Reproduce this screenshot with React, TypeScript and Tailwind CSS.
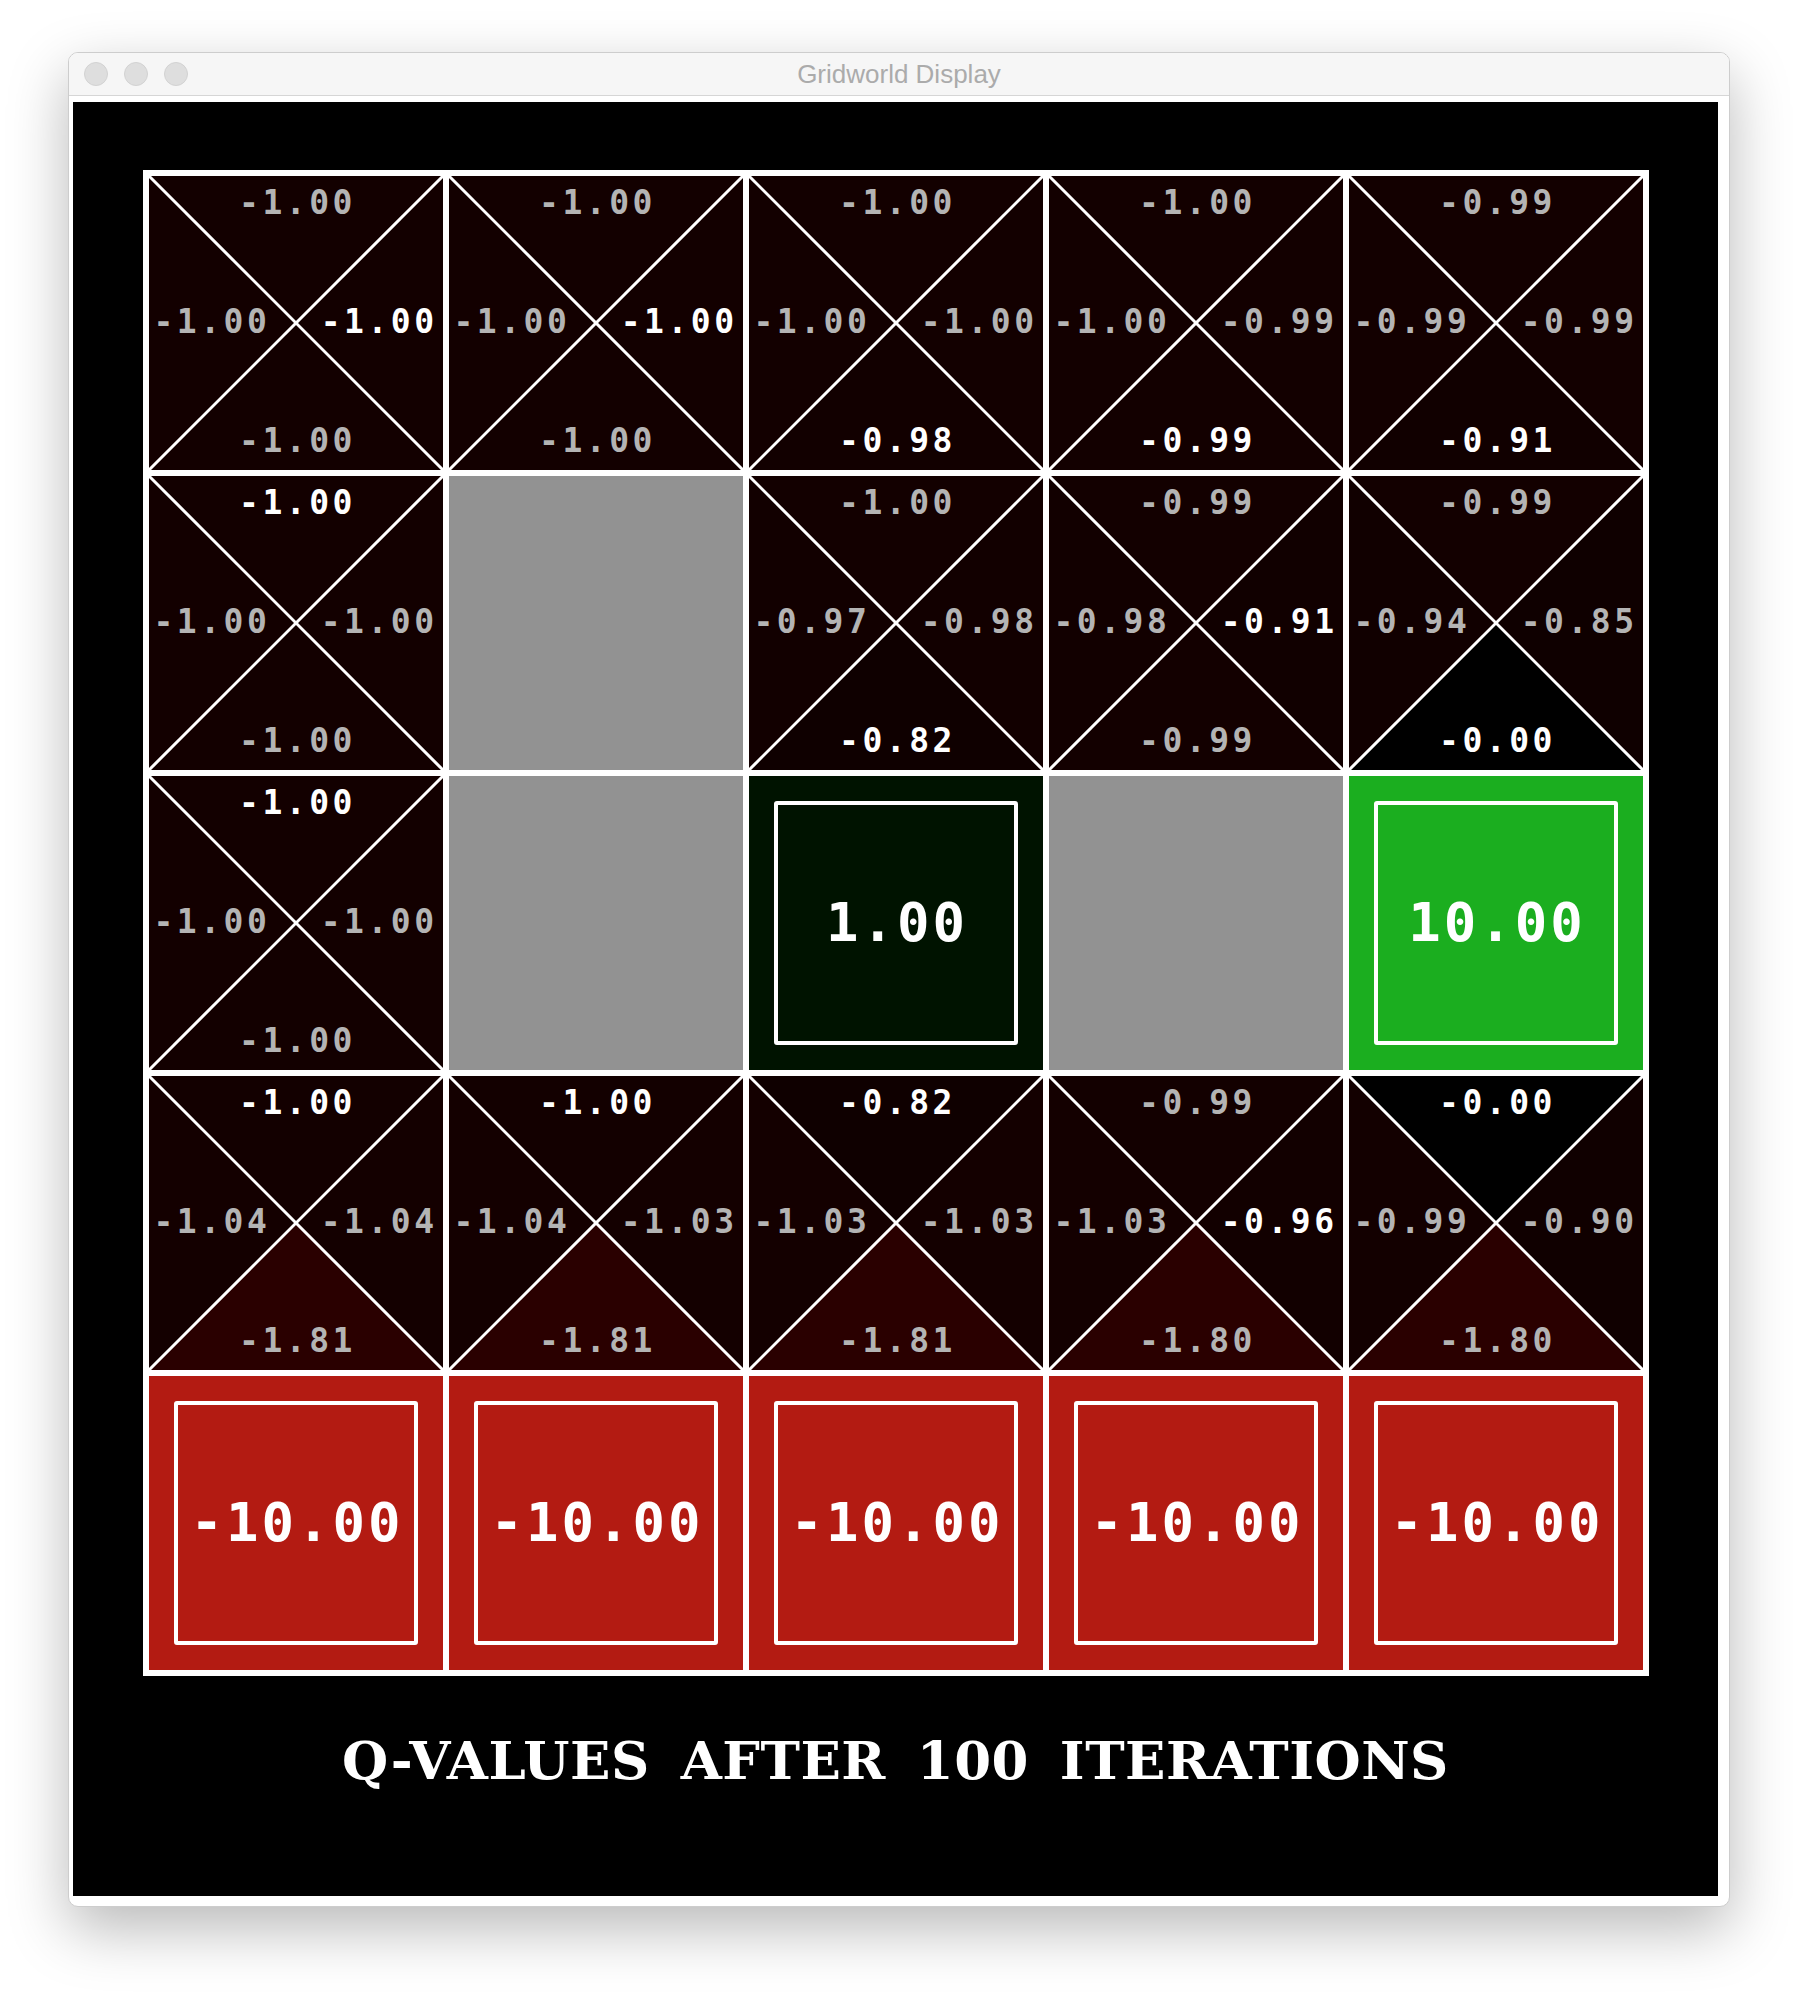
import React from 'react';

type Dir = 'n' | 's' | 'w' | 'e';
type QCellData = { kind: 'q'; n: string; s: string; w: string; e: string; best: Dir };
type Cell = QCellData | { kind: 'wall' } | { kind: 'term'; value: string; tone: 'dim' | 'goal' | 'pit' };

const q = (n: string, w: string, e: string, s: string, best: Dir): QCellData => ({ kind: 'q', n, s, w, e, best });
const WALL: Cell = { kind: 'wall' };
const PIT: Cell = { kind: 'term', value: '-10.00', tone: 'pit' };

const grid: Cell[][] = [
  [
    q('-1.00', '-1.00', '-1.00', '-1.00', 'e'),
    q('-1.00', '-1.00', '-1.00', '-1.00', 'e'),
    q('-1.00', '-1.00', '-1.00', '-0.98', 's'),
    q('-1.00', '-1.00', '-0.99', '-0.99', 's'),
    q('-0.99', '-0.99', '-0.99', '-0.91', 's'),
  ],
  [
    q('-1.00', '-1.00', '-1.00', '-1.00', 'n'),
    WALL,
    q('-1.00', '-0.97', '-0.98', '-0.82', 's'),
    q('-0.99', '-0.98', '-0.91', '-0.99', 'e'),
    q('-0.99', '-0.94', '-0.85', '-0.00', 's'),
  ],
  [
    q('-1.00', '-1.00', '-1.00', '-1.00', 'n'),
    WALL,
    { kind: 'term', value: '1.00', tone: 'dim' },
    WALL,
    { kind: 'term', value: '10.00', tone: 'goal' },
  ],
  [
    q('-1.00', '-1.04', '-1.04', '-1.81', 'n'),
    q('-1.00', '-1.04', '-1.03', '-1.81', 'n'),
    q('-0.82', '-1.03', '-1.03', '-1.81', 'n'),
    q('-0.99', '-1.03', '-0.96', '-1.80', 'e'),
    q('-0.00', '-0.99', '-0.90', '-1.80', 'n'),
  ],
  [PIT, PIT, PIT, PIT, PIT],
];

// darker red the more negative the value
function shade(v: string) {
  const r = Math.min(255, Math.round(19 * Math.pow(Math.abs(parseFloat(v)), 1.35)));
  return `rgb(${r},0,0)`;
}

function QCell({ c }: { c: QCellData }) {
  const label = (d: Dir) => (
    <span className={c.best === d ? 'text-white' : 'text-[#b4b4b4]'}>{c[d]}</span>
  );
  return (
    <div className="relative w-[294px] h-[294px]">
      <svg className="absolute inset-0 overflow-visible" width="294" height="294" viewBox="0 0 294 294">
        <polygon points="0,0 294,0 147,147" fill={shade(c.n)} />
        <polygon points="294,0 294,294 147,147" fill={shade(c.e)} />
        <polygon points="294,294 0,294 147,147" fill={shade(c.s)} />
        <polygon points="0,294 0,0 147,147" fill={shade(c.w)} />
        <line x1="-3" y1="-3" x2="297" y2="297" stroke="#fff" strokeWidth="3" />
        <line x1="297" y1="-3" x2="-3" y2="297" stroke="#fff" strokeWidth="3" />
      </svg>
      <div className="absolute inset-0 flex flex-col justify-between pt-[10px] pb-[13px] pl-[5px] pr-[5px] [font-family:'DejaVu_Sans_Mono',monospace] text-[33px] leading-none font-bold tracking-[3.5px]">
        <div className="flex justify-center pl-[4px]">{label('n')}</div>
        <div className="flex justify-between">
          {label('w')}
          {label('e')}
        </div>
        <div className="flex justify-center pl-[4px]">{label('s')}</div>
      </div>
    </div>
  );
}

function TermCell({ value, tone }: { value: string; tone: 'dim' | 'goal' | 'pit' }) {
  const bg = tone === 'pit' ? 'bg-[#b31b12]' : tone === 'goal' ? 'bg-[#1bae1f]' : 'bg-[#001300]';
  return (
    <div className={`w-[294px] h-[294px] p-[25px] ${bg}`}>
      <div className="w-full h-full border-4 border-white rounded-[3px] flex items-center justify-center pl-[3px] text-white [font-family:'DejaVu_Sans_Mono',monospace] text-[54px] leading-none font-bold tracking-[3px]">
        {value}
      </div>
    </div>
  );
}

export default function App() {
  return (
    <div className="min-h-[1992px] bg-white pt-[52px] pl-[68px]">
      <div className="w-[1662px] h-[1855px] flex flex-col rounded-[10px] overflow-hidden border border-[#cdcdcd] bg-white shadow-[0_22px_60px_rgba(0,0,0,0.28)]">
        {/* title bar */}
        <div className="h-[43px] shrink-0 grid grid-cols-[1fr_auto_1fr] items-center bg-[#f6f6f6] border-b border-[#d6d6d6]">
          <div className="flex gap-[16px] pl-[15px]">
            <div className="w-[24px] h-[24px] rounded-full bg-[#dedede] border border-[#d2d2d2]"></div>
            <div className="w-[24px] h-[24px] rounded-full bg-[#dedede] border border-[#d2d2d2]"></div>
            <div className="w-[24px] h-[24px] rounded-full bg-[#dedede] border border-[#d2d2d2]"></div>
          </div>
          <div className="[font-family:'Liberation_Sans',Arial,sans-serif] text-[26px] text-[#ababab]">Gridworld Display</div>
          <div></div>
        </div>

        {/* canvas */}
        <div className="flex-1 flex flex-col pl-[4px] pt-[6px] pr-[11px] pb-[10px]">
          <div className="flex-1 bg-black flex flex-col items-center pt-[68px]">
            <div className="w-[1506px] h-[1506px] bg-white p-[6px] grid grid-cols-5 gap-[6px]">
              {grid.flat().map((c, i) =>
                c.kind === 'q' ? (
                  <QCell key={i} c={c} />
                ) : c.kind === 'wall' ? (
                  <div key={i} className="w-[294px] h-[294px] bg-[#929292]"></div>
                ) : (
                  <TermCell key={i} value={c.value} tone={c.tone} />
                )
              )}
            </div>
            <div className="mt-[58px] [font-family:'DejaVu_Serif','Liberation_Serif',serif] text-[53px] leading-none font-bold tracking-[0.5px] [word-spacing:12px] text-white whitespace-pre">
              Q-VALUES AFTER 100 ITERATIONS
            </div>
          </div>
        </div>
      </div>
    </div>
  );
}
